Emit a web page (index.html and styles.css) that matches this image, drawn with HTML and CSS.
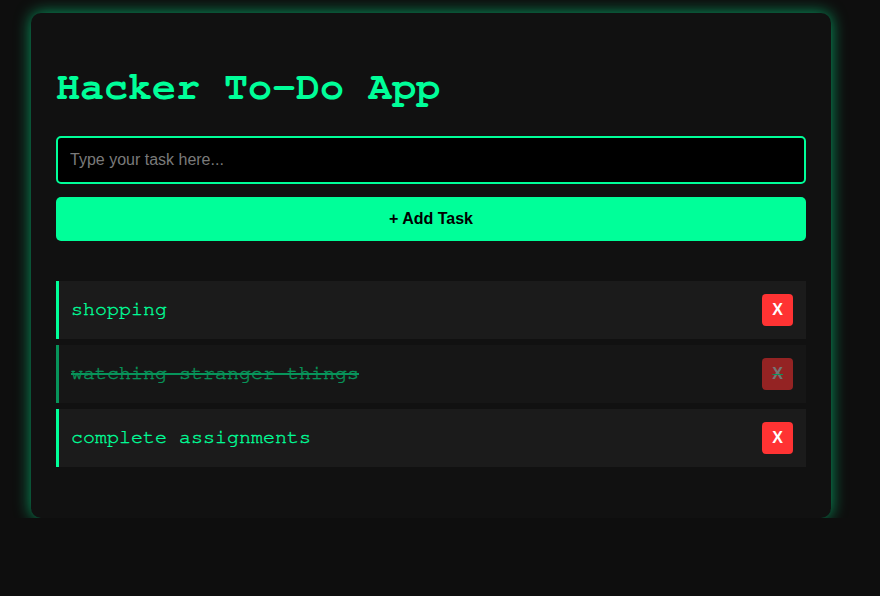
FILE: index.html
```html
<!DOCTYPE html>
<html lang="en">
<head>
<meta charset="utf-8">
<title>Hacker To-Do App</title>
<link rel="stylesheet" href="styles.css">
</head>
<body>
<main class="card">
  <h1 class="title">Hacker To-Do App</h1>
  <input class="task-input" type="text" placeholder="Type your task here...">
  <button class="add-btn">+ Add Task</button>
  <ul class="task-list">
    <li class="task"><span class="task-text">shopping</span><button class="del">X</button></li>
    <li class="task done"><span class="task-text">watching stranger things</span><button class="del">X</button></li>
    <li class="task"><span class="task-text">complete assignments</span><button class="del">X</button></li>
  </ul>
</main>
</body>
</html>
```

FILE: styles.css
```css
html, body {
  margin: 0;
  padding: 0;
  background: #0e0e0e;
}

body {
  padding: 13px 0 0 31px;
  font-family: "Nimbus Mono PS", "Nimbus Mono L", "FreeMono", "Courier", "Courier New", "Liberation Mono", monospace;
}

.card {
  box-sizing: border-box;
  width: 800px;
  padding: 25px;
  background: #111111;
  border-radius: 10px;
  box-shadow: 0 0 16px rgba(0, 255, 153, 0.6);
  display: flex;
  flex-direction: column;
}

.title {
  margin: 27px 0 26px;
  font-family: "Nimbus Mono PS", "Nimbus Mono L", "FreeMono", "Courier", "Courier New", "Liberation Mono", monospace;
  font-weight: bold;
  font-size: 40px;
  line-height: 45px;
  color: #00ff99;
}

.task-input {
  box-sizing: border-box;
  height: 48px;
  width: 100%;
  padding: 0 12px;
  background: #000;
  border: 2px solid #00ff99;
  border-radius: 5px;
  font-family: "Liberation Sans", Arial, sans-serif;
  font-size: 16px;
  color: #00ff99;
  outline: none;
}

.task-input::placeholder {
  color: #7a7a7a;
}

.add-btn {
  margin-top: 13px;
  height: 44px;
  width: 100%;
  border: none;
  border-radius: 5px;
  background: #00ff99;
  color: #000;
  font-family: "Liberation Sans", Arial, sans-serif;
  font-weight: bold;
  font-size: 16px;
}

.task-list {
  list-style: none;
  margin: 40px 0 26px;
  padding: 0;
  display: flex;
  flex-direction: column;
  gap: 6.5px;
}

.task {
  box-sizing: border-box;
  height: 57.5px;
  display: flex;
  align-items: center;
  justify-content: space-between;
  padding: 0 13px 0 12px;
  background: #1b1b1b;
  border-left: 3px solid #00ff99;
}

.task-text {
  font-family: "Nimbus Mono PS", "Nimbus Mono L", "FreeMono", "Courier", "Courier New", "Liberation Mono", monospace;
  font-size: 20px;
  line-height: 23px;
  color: #00ff99;
  -webkit-text-stroke: 0.35px #00ff99;
}

.del {
  padding: 7px 10px;
  border: none;
  border-radius: 4px;
  background: #ff3333;
  color: #fff;
  font-family: "Liberation Sans", Arial, sans-serif;
  font-weight: bold;
  font-size: 16px;
  line-height: 18px;
}

.done {
  opacity: 0.55;
}

.done .task-text {
  text-decoration: line-through;
  text-decoration-thickness: 2px;
}

.done .del {
  color: #c8c8c8;
  text-decoration: line-through;
  text-decoration-color: #00ff99;
}
```
